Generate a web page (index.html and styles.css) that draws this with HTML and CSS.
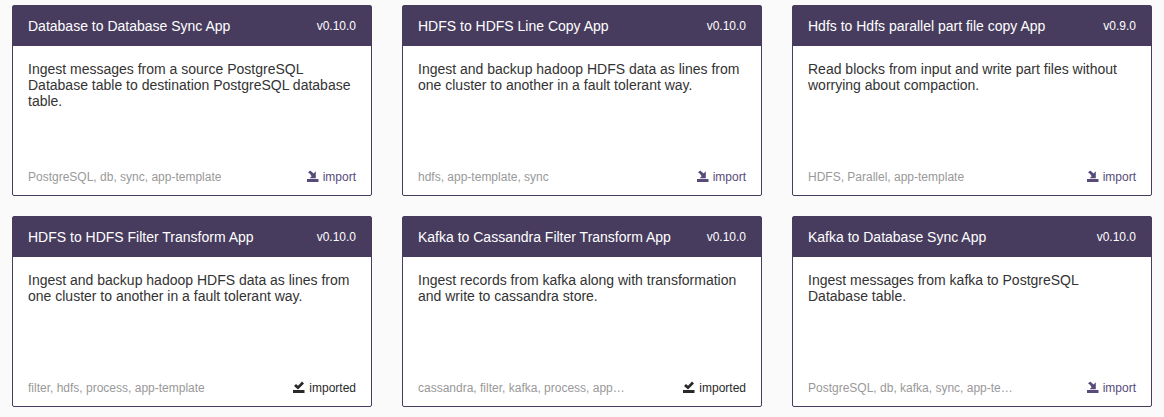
FILE: index.html
```html
<!DOCTYPE html>
<html lang="en">
<head>
<meta charset="utf-8">
<title>App templates</title>
<link rel="stylesheet" href="styles.css">
</head>
<body>
<svg class="sprite" aria-hidden="true">
  <symbol id="icon-import" viewBox="0 0 12 12">
    <path d="M1 2.600 3.200.5l3.400 3L8.800 1.200V8.200H2.600L4.600 6.200 3 3.800z"/>
    <path d="M0 9h11.500v3H0z"/>
  </symbol>
  <symbol id="icon-imported" viewBox="0 0 12 12">
    <path d="M1 5 3 3l2 1.800L9 .6 11 2.500 5 8.400z"/>
    <path d="M0 9h11.500v3H0z"/>
  </symbol>
</svg>
<main class="apps">
  <article class="card">
    <header class="card-header"><h2 class="card-title">Database to Database Sync App</h2><span class="version">v0.10.0</span></header>
    <p class="description">Ingest messages from a source PostgreSQL Database table to destination PostgreSQL database table.</p>
    <footer class="card-footer"><span class="tags">PostgreSQL, db, sync, app-template</span><button class="action" type="button"><svg class="icon" aria-hidden="true"><use href="#icon-import"/></svg>import</button></footer>
  </article>
  <article class="card">
    <header class="card-header"><h2 class="card-title">HDFS to HDFS Line Copy App</h2><span class="version">v0.10.0</span></header>
    <p class="description">Ingest and backup hadoop HDFS data as lines from one cluster to another in a fault tolerant way.</p>
    <footer class="card-footer"><span class="tags">hdfs, app-template, sync</span><button class="action" type="button"><svg class="icon" aria-hidden="true"><use href="#icon-import"/></svg>import</button></footer>
  </article>
  <article class="card">
    <header class="card-header"><h2 class="card-title">Hdfs to Hdfs parallel part file copy App</h2><span class="version">v0.9.0</span></header>
    <p class="description">Read blocks from input and write part files without worrying about compaction.</p>
    <footer class="card-footer"><span class="tags">HDFS, Parallel, app-template</span><button class="action" type="button"><svg class="icon" aria-hidden="true"><use href="#icon-import"/></svg>import</button></footer>
  </article>
  <article class="card">
    <header class="card-header"><h2 class="card-title">HDFS to HDFS Filter Transform App</h2><span class="version">v0.10.0</span></header>
    <p class="description">Ingest and backup hadoop HDFS data as lines from one cluster to another in a fault tolerant way.</p>
    <footer class="card-footer"><span class="tags">filter, hdfs, process, app-template</span><span class="action action-done"><svg class="icon" aria-hidden="true"><use href="#icon-imported"/></svg>imported</span></footer>
  </article>
  <article class="card">
    <header class="card-header"><h2 class="card-title">Kafka to Cassandra Filter Transform App</h2><span class="version">v0.10.0</span></header>
    <p class="description">Ingest records from kafka along with transformation and write to cassandra store.</p>
    <footer class="card-footer"><span class="tags">cassandra, filter, kafka, process, app-template</span><span class="action action-done"><svg class="icon" aria-hidden="true"><use href="#icon-imported"/></svg>imported</span></footer>
  </article>
  <article class="card">
    <header class="card-header"><h2 class="card-title">Kafka to Database Sync App</h2><span class="version">v0.10.0</span></header>
    <p class="description">Ingest messages from kafka to PostgreSQL Database table.</p>
    <footer class="card-footer"><span class="tags">PostgreSQL, db, kafka, sync, app-template</span><button class="action" type="button"><svg class="icon" aria-hidden="true"><use href="#icon-import"/></svg>import</button></footer>
  </article>
</main>
</body>
</html>
```
FILE: styles.css
```css
* {
  box-sizing: border-box;
}

body {
  margin: 0;
  background: #fafafa;
  color: #333;
  font: 14px/16px "Liberation Sans", Arial, sans-serif;
}

.sprite {
  display: none;
}

.apps {
  display: grid;
  grid-template-columns: repeat(3, minmax(0, 1fr));
  gap: 20px 30px;
  padding: 5px 12px 10px;
}

.card {
  display: flex;
  flex-direction: column;
  min-height: 191px;
  border: 1px solid #473c5e;
  border-radius: 2px;
  background: #fff;
}

.card-header {
  display: flex;
  align-items: center;
  justify-content: space-between;
  padding: 12px 15px;
  background: #473c5e;
  color: #fff;
}

.card-title {
  margin: 0;
  font-size: 14px;
  font-weight: normal;
}

.version {
  font-size: 12px;
}

.description {
  flex: 1;
  margin: 0;
  padding: 15px 15px 0;
}

.card-footer {
  display: flex;
  align-items: center;
  justify-content: space-between;
  padding: 10px 15px;
  font-size: 12px;
}

.tags {
  max-width: 210px;
  overflow: hidden;
  color: #999;
  text-overflow: ellipsis;
  white-space: nowrap;
}

.action {
  display: flex;
  align-items: center;
  gap: 4px;
  padding: 0;
  border: 0;
  background: none;
  color: #574b7a;
  font: inherit;
  cursor: pointer;
}

.action-done {
  color: #2a2a2a;
  cursor: default;
}

.icon {
  width: 12px;
  height: 12px;
  margin-bottom: 2px;
  fill: currentColor;
}
```
